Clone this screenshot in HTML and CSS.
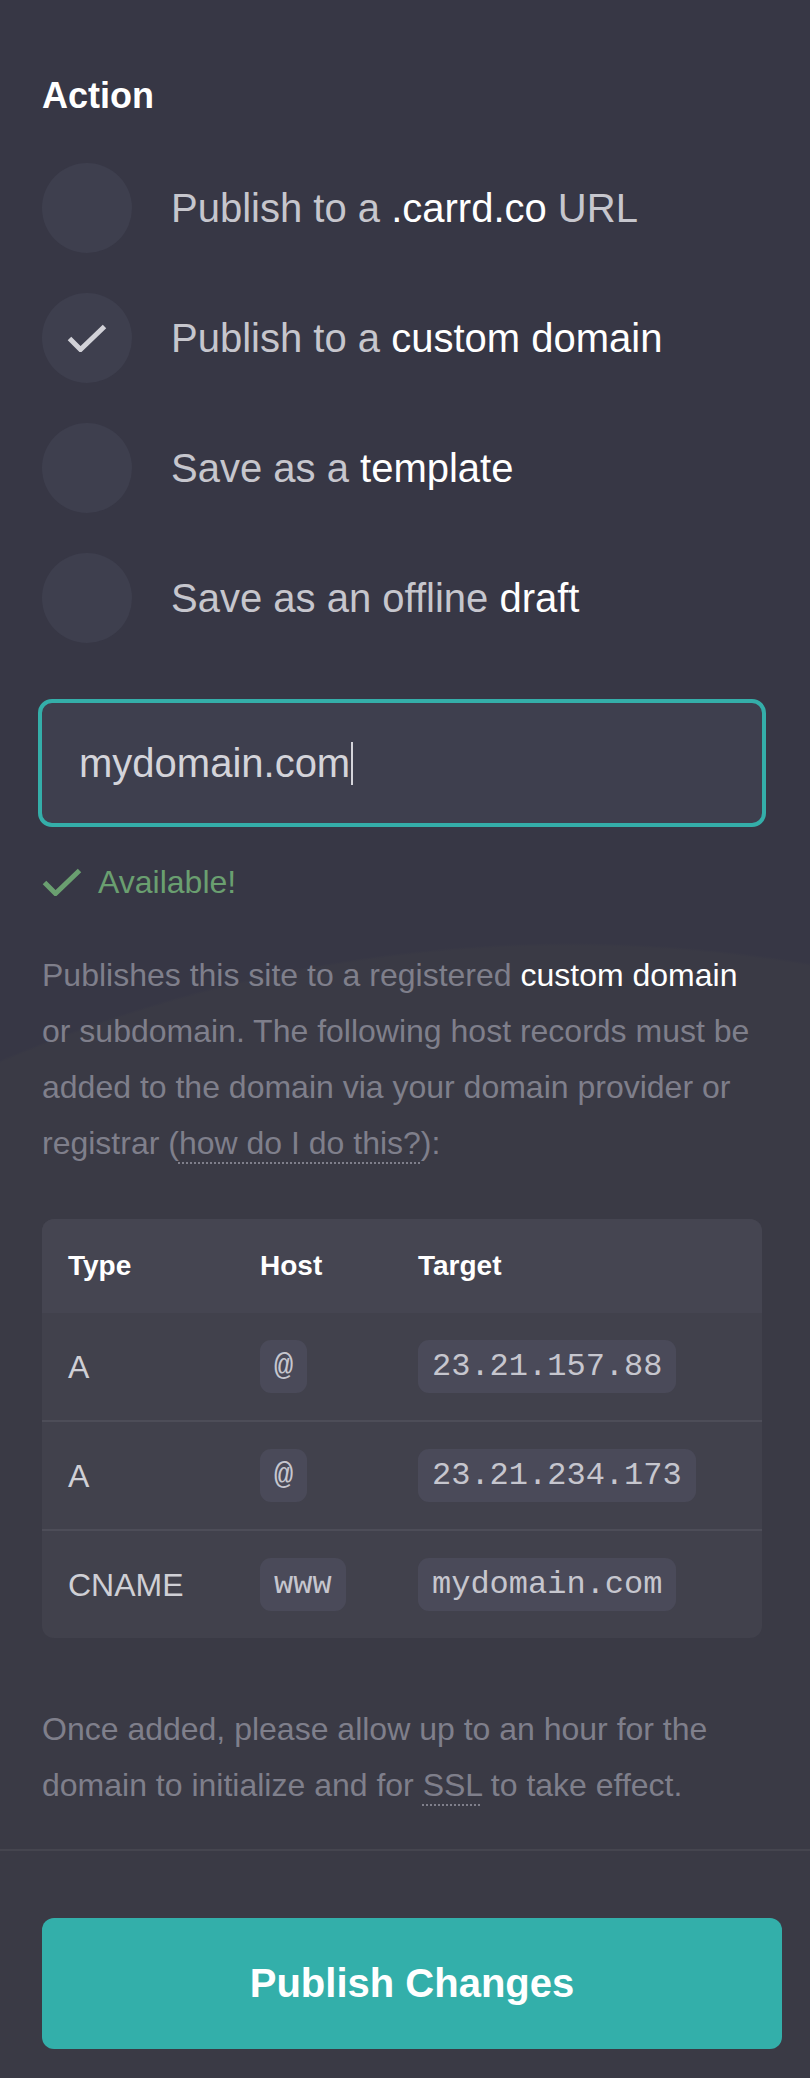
FILE: index.html
```html
<!DOCTYPE html>
<html lang="en">
<head>
<meta charset="utf-8">
<title>Publish</title>
<link rel="stylesheet" href="styles.css">
</head>
<body>
<div class="panel">
  <div class="content">
    <h2 class="label">Action</h2>
    <div class="options">
      <div class="option">
        <span class="radio"></span>
        <span class="opt-text">Publish to a <span class="hl">.carrd.co</span> URL</span>
      </div>
      <div class="option">
        <span class="radio">
          <svg class="radio-check" width="40" height="28" viewBox="0 0 40 28"><polyline points="2.5,14.5 13.5,25.5 37.5,2.5" fill="none" stroke="currentColor" stroke-width="5"/></svg>
        </span>
        <span class="opt-text">Publish to a <span class="hl">custom domain</span></span>
      </div>
      <div class="option">
        <span class="radio"></span>
        <span class="opt-text">Save as a <span class="hl">template</span></span>
      </div>
      <div class="option">
        <span class="radio"></span>
        <span class="opt-text">Save as an offline <span class="hl">draft</span></span>
      </div>
    </div>

    <div class="field">
      <span class="field-value">mydomain.com</span><span class="caret"></span>
    </div>

    <div class="status">
      <svg class="status-check" width="40" height="28" viewBox="0 0 40 28"><polyline points="2.5,14.5 13.5,25.5 37.5,2.5" fill="none" stroke="currentColor" stroke-width="5"/></svg>
      <span>Available!</span>
    </div>

    <p class="desc">Publishes this site to a registered <span class="hl">custom domain</span> or subdomain. The following host records must be added to the domain via your domain provider or <span>registrar (</span><span class="dotted">how do I do this?</span><span>):</span></p>

    <div class="records">
      <div class="rec-row rec-head">
        <div class="cell">Type</div>
        <div class="cell">Host</div>
        <div class="cell">Target</div>
      </div>
      <div class="rec-row">
        <div class="cell">A</div>
        <div class="cell"><code class="chip">@</code></div>
        <div class="cell"><code class="chip">23.21.157.88</code></div>
      </div>
      <div class="rec-row rec-sep">
        <div class="cell">A</div>
        <div class="cell"><code class="chip">@</code></div>
        <div class="cell"><code class="chip">23.21.234.173</code></div>
      </div>
      <div class="rec-row rec-sep">
        <div class="cell">CNAME</div>
        <div class="cell"><code class="chip">www</code></div>
        <div class="cell"><code class="chip">mydomain.com</code></div>
      </div>
    </div>

    <p class="note">Once added, please allow up to an hour for the <span>domain to initialize and for </span><span class="dotted">SSL</span><span> to take effect.</span></p>
  </div>
  <div class="footer">
    <button class="publish" type="button">Publish Changes</button>
  </div>
</div>
</body>
</html>
```
FILE: styles.css
```css
html, body {
  margin: 0;
  padding: 0;
}

body {
  width: 810px;
  min-height: 2078px;
  background-color: #373745;
  background-image: radial-gradient(circle 1447px at 570px 2390px, #3a3a45 99.8%, rgba(58, 58, 69, 0) 100%);
  background-repeat: no-repeat;
  font-family: "Liberation Sans", Arial, Helvetica, sans-serif;
  color: #c8c8ce;
}

.panel {
  display: flex;
  flex-direction: column;
}

.content {
  padding: 76px 48px 36px 42px;
  display: flex;
  flex-direction: column;
}

.label {
  margin: 0;
  font-size: 36px;
  line-height: 40px;
  font-weight: 700;
  color: #ffffff;
}

.options {
  margin-top: 47px;
  display: flex;
  flex-direction: column;
  gap: 40px;
}

.option {
  display: flex;
  align-items: center;
  gap: 39px;
  height: 90px;
}

.radio {
  flex: none;
  width: 90px;
  height: 90px;
  border-radius: 50%;
  background: #3e3f4e;
  display: flex;
  align-items: center;
  justify-content: center;
  color: #d2d2d8;
}

.radio-check {
  display: block;
  margin-left: -1px;
}

.opt-text {
  font-size: 40px;
  line-height: 46px;
  color: #c6c6cd;
}

.hl {
  color: #ffffff;
}

.field {
  margin: 56px -4px 0 -4px;
  height: 128px;
  box-sizing: border-box;
  border: 4px solid #34aea9;
  border-radius: 14px;
  background: #3e3f4e;
  padding-left: 37px;
  display: flex;
  align-items: center;
}

.field-value {
  font-size: 40px;
  line-height: 46px;
  color: #d4d4da;
}

.caret {
  display: block;
  width: 2px;
  height: 43px;
  margin-left: 1px;
  background: #d4d4da;
}

.status {
  margin-top: 35px;
  height: 40px;
  display: flex;
  align-items: center;
  gap: 16px;
  color: #6a9f70;
  font-size: 32px;
  line-height: 40px;
}

.status-check {
  display: block;
  flex: none;
}

.desc,
.note {
  margin: 45px 0 0 0;
  font-size: 32px;
  line-height: 56px;
  color: #7f7f8b;
}

.note {
  margin-top: 63px;
}

.dotted {
  text-decoration-line: underline;
  text-decoration-style: dotted;
  text-decoration-thickness: 2px;
  text-decoration-color: #7f7f8b;
  text-underline-offset: 8px;
}

.records {
  margin-top: 48px;
  border-radius: 12px;
  overflow: hidden;
  background: #41414c;
}

.rec-row {
  display: grid;
  grid-template-columns: 192px 158px 1fr;
  align-items: center;
  height: 107px;
}

.rec-sep {
  border-top: 2px solid #4d4d58;
}

.rec-head {
  height: 94px;
  background: #454551;
}

.cell {
  padding-left: 26px;
  font-size: 32px;
  line-height: 40px;
  color: #cfcfd5;
}

.rec-head .cell {
  font-size: 28px;
  line-height: 32px;
  font-weight: 700;
  color: #ffffff;
}

.chip {
  display: inline-block;
  vertical-align: middle;
  height: 53px;
  line-height: 53px;
  padding: 0 14px;
  border-radius: 11px;
  background: #4a4a59;
  font-family: "Liberation Mono", "Courier New", monospace;
  font-size: 32px;
  color: #c6c6ce;
}

.footer {
  border-top: 2px solid #45454f;
  padding: 67px 28px 29px 42px;
}

.publish {
  display: block;
  width: 100%;
  height: 131px;
  border: 0;
  border-radius: 12px;
  background: #33afaa;
  color: #ffffff;
  font-family: "Liberation Sans", Arial, Helvetica, sans-serif;
  font-size: 40px;
  font-weight: 700;
  cursor: pointer;
}
```
